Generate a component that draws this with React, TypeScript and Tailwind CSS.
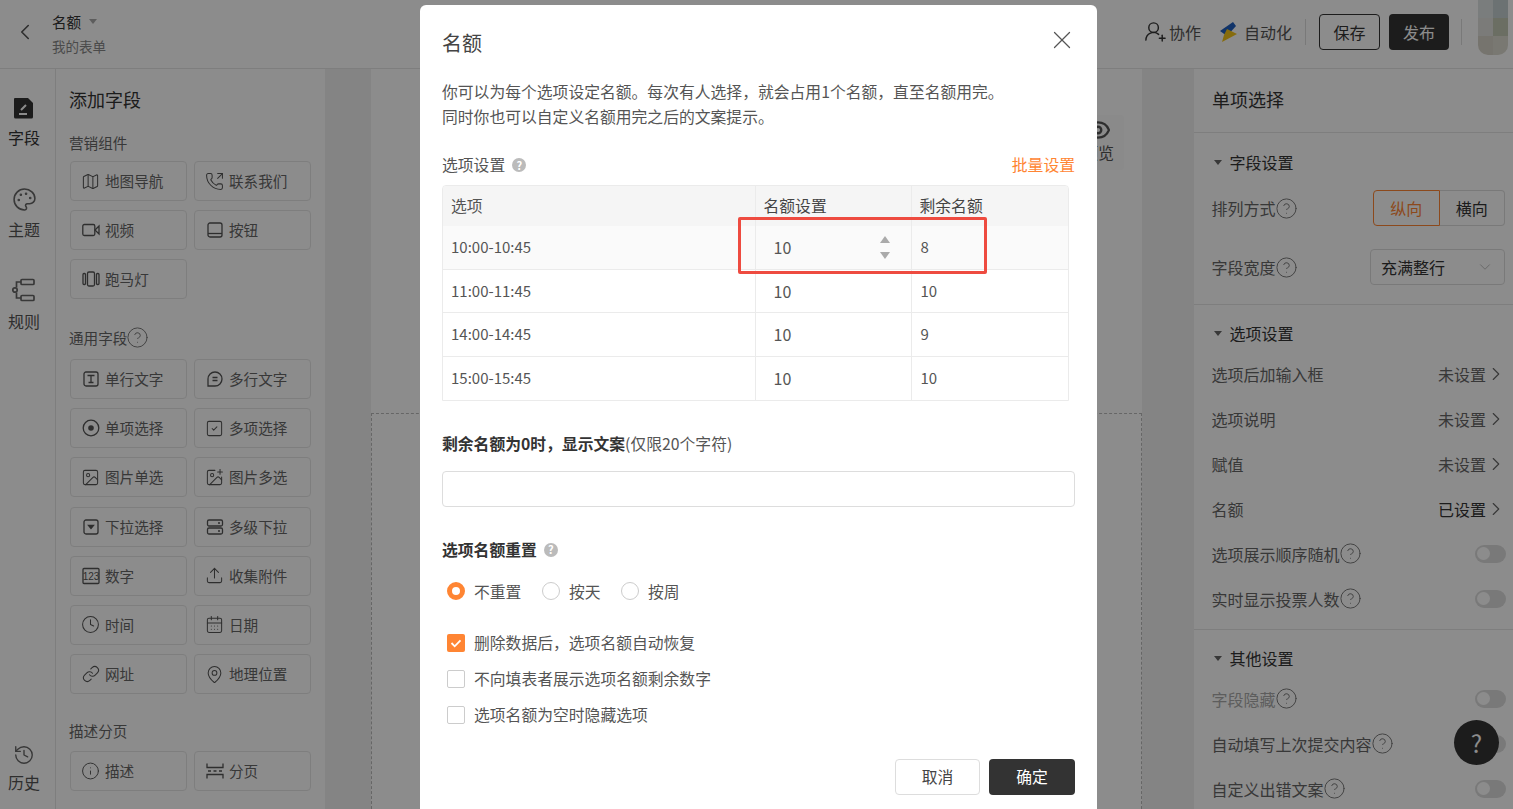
import { ReactNode } from "react";
import {
  CalendarDays,
  ChevronDown,
  ChevronLeft,
  ChevronRight,
  CircleHelp,
  Clock,
  Eye,
  History,
  Image,
  ImagePlus,
  Info,
  Link,
  Map,
  MapPin,
  Palette,
  PhoneOutgoing,
  SquareCheck,
  Upload,
  UserRoundPlus,
  X,
} from "lucide-react";

const font = "font-['Noto_Sans_CJK_SC','Noto_Sans',sans-serif]";

function Svg({ children }: { children: ReactNode }) {
  return (
    <svg width="18" height="18" viewBox="0 0 18 18" fill="none" stroke="currentColor" strokeWidth="1.3" className="shrink-0">
      {children}
    </svg>
  );
}

const VideoIcon = () => (
  <Svg>
    <rect x="0.800" y="3.500" width="12" height="11" rx="1.500" />
    <path d="M17 5l-4 4 4 4z" />
  </Svg>
);
const RadioIcon = () => (
  <Svg>
    <circle cx="9" cy="9" r="7.800" />
    <circle cx="9" cy="9" r="2.800" fill="currentColor" stroke="none" />
  </Svg>
);
const ButtonIcon = () => (
  <Svg>
    <rect x="2" y="2" width="14" height="14" rx="2" />
    <path d="M2 12.500h14" />
  </Svg>
);
const MarqueeIcon = () => (
  <Svg>
    <rect x="5.500" y="2" width="7" height="14" rx="1.500" />
    <rect x="1" y="3.500" width="2.500" height="11" rx="1" />
    <rect x="14.500" y="3.500" width="2.500" height="11" rx="1" />
  </Svg>
);
const TextIcon = () => (
  <Svg>
    <rect x="2" y="2" width="14" height="14" rx="2" />
    <path d="M5.500 5.500h7M9 5.500v7M6.500 12.500h5" />
  </Svg>
);
const ParagraphIcon = () => (
  <Svg>
    <path d="M9 2a7 7 0 1 1 0 14H2V9a7 7 0 0 1 7-7z" />
    <path d="M6.500 7.500h5M6.500 10.500h5" />
  </Svg>
);
const DropdownIcon = () => (
  <Svg>
    <rect x="2" y="2" width="14" height="14" rx="2" />
    <path d="M6.500 7.500h5L9 10.500z" fill="currentColor" />
  </Svg>
);
const CascadeIcon = () => (
  <Svg>
    <rect x="1.500" y="2" width="15" height="6" rx="1.500" />
    <rect x="1.500" y="10" width="15" height="6" rx="1.500" />
    <path d="M12 5h2M12 13h2" />
  </Svg>
);
const NumberIcon = () => (
  <Svg>
    <rect x="1" y="1.500" width="16" height="15" rx="1" />
    <text x="9" y="12.800" textAnchor="middle" fontSize="10" fill="currentColor" stroke="none" fontFamily="Liberation Sans">
      123
    </text>
  </Svg>
);
const PageIcon = () => (
  <Svg>
    <path d="M1 1.500v4h16v-4M1 16.500v-4h16v4" />
    <path d="M2 9h3M7.500 9h3M13 9h3" />
  </Svg>
);

const groups: { title: string; help?: boolean; gap: string; after: string; items: [string, ReactNode][] }[] = [
  {
    title: "营销组件",
    gap: "mb-[8px]",
    after: "mb-[28.600px]",
    items: [
      ["地图导航", <Map size={19} strokeWidth={1.3} />],
      ["联系我们", <PhoneOutgoing size={19} strokeWidth={1.3} />],
      ["视频", <VideoIcon />],
      ["按钮", <ButtonIcon />],
      ["跑马灯", <MarqueeIcon />],
    ],
  },
  {
    title: "通用字段",
    help: true,
    gap: "mb-[11px]",
    after: "mb-[27px]",
    items: [
      ["单行文字", <TextIcon />],
      ["多行文字", <ParagraphIcon />],
      ["单项选择", <RadioIcon />],
      ["多项选择", <SquareCheck size={19} strokeWidth={1.3} />],
      ["图片单选", <Image size={19} strokeWidth={1.3} />],
      ["图片多选", <ImagePlus size={19} strokeWidth={1.3} />],
      ["下拉选择", <DropdownIcon />],
      ["多级下拉", <CascadeIcon />],
      ["数字", <NumberIcon />],
      ["收集附件", <Upload size={19} strokeWidth={1.3} />],
      ["时间", <Clock size={19} strokeWidth={1.3} />],
      ["日期", <CalendarDays size={19} strokeWidth={1.3} />],
      ["网址", <Link size={18} strokeWidth={1.4} />],
      ["地理位置", <MapPin size={19} strokeWidth={1.3} />],
    ],
  },
  {
    title: "描述分页",
    gap: "mb-[10px]",
    after: "mb-[28px]",
    items: [
      ["描述", <Info size={20} strokeWidth={1.2} />],
      ["分页", <PageIcon />],
    ],
  },
];

const quotas = [
  { name: "10:00-10:45", left: 8 },
  { name: "11:00-11:45", left: 10 },
  { name: "14:00-14:45", left: 9 },
  { name: "15:00-15:45", left: 10 },
];

const avatarColors = ["#dfe3e3", "#c5d0d2", "#e0e0dc", "#c4c8b4", "#d8d3c8", "#dcdad0"];

function Help() {
  return <CircleHelp size={23} strokeWidth={1} className="-mx-[1px] shrink-0 text-[#777]" />;
}

function SolidHelp() {
  return (
    <span className="flex size-[14px] items-center justify-center rounded-full bg-[#bbb] text-[11px] font-bold leading-none text-white">
      ?
    </span>
  );
}

function Toggle() {
  return (
    <span className="flex h-[18px] w-[31px] items-center rounded-full bg-[#ddd] pl-[2px]">
      <span className="size-[13px] rounded-full bg-white" />
    </span>
  );
}

function Arrow({ label, strong }: { label: string; strong?: boolean }) {
  return (
    <span className={`flex items-center text-[16px] ${strong ? "text-[#333]" : "text-[#666]"}`}>
      {label}
      <ChevronRight size={22} strokeWidth={1.2} className="-ml-[1px] text-[#666]" />
    </span>
  );
}

function SideRow({ children, right, className = "h-[45px]" }: { children: ReactNode; right: ReactNode; className?: string }) {
  return (
    <div className={`flex items-center justify-between text-[16px] text-[#666] ${className}`}>
      <span className="flex items-center whitespace-nowrap">{children}</span>
      {right}
    </div>
  );
}

function SectionTitle({ children }: { children: ReactNode }) {
  return (
    <div className="flex h-[22px] items-center gap-[8px] text-[16px] leading-none text-[#333]">
      <span className="ml-[2px] size-0 border-x-[4px] border-t-[5px] border-x-transparent border-t-[#666]" />
      {children}
    </div>
  );
}

function Rail() {
  return (
    <aside className="flex w-[56px] shrink-0 flex-col items-center border-r border-[#e6e6e6] pt-[27px] pr-[7px] text-[16px] leading-none text-[#555]">
      <svg width="24" height="24" viewBox="0 0 24 24">
        <path d="M3 2h13l5 5v14a1.500 1.500 0 0 1-1.500 1.500h-16A1.500 1.500 0 0 1 2 21V3a1 1 0 0 1 1-1z" fill="#333" />
        <path d="M9 14l5-5M7 18h8" stroke="#fff" strokeWidth="2" />
      </svg>
      <span className="mt-[9px] text-[#333]">字段</span>
      <Palette size={25} strokeWidth={1.5} className="mt-[42px] text-[#666]" />
      <span className="mt-[9px]">主题</span>
      <svg width="26" height="26" viewBox="0 0 26 26" fill="none" stroke="#666" strokeWidth="1.700" className="mt-[40px]">
        <rect x="10" y="2.500" width="13" height="5" rx="1" />
        <rect x="10" y="18.500" width="13" height="5" rx="1" />
        <circle cx="4" cy="13" r="2.200" />
        <path d="M10 5H5.500v5.500M5.500 15.500V21H10" />
      </svg>
      <span className="mt-[10px]">规则</span>
      <div className="mt-auto mb-[19px] flex flex-col items-center">
        <History size={22} strokeWidth={1.5} className="text-[#666]" />
        <span className="mt-[8px]">历史</span>
      </div>
    </aside>
  );
}

function FieldPanel() {
  return (
    <aside className="w-[269px] shrink-0 pl-[14px] text-[#666]">
      <h2 className="mt-[18px] -ml-[1px] text-[18px] leading-[24px] text-[#333]">添加字段</h2>
      {groups.map(group => (
        <section key={group.title} className={group.after}>
          <div className={`mt-[22px] -ml-[1px] flex h-[20px] items-center text-[14.600px] ${group.gap}`}>
            {group.title}
            {group.help && <Help />}
          </div>
          <div className="grid grid-cols-[117px_117px] gap-x-[7px] gap-y-[9.200px]">
            {group.items.map(([label, icon]) => (
              <div key={label} className="flex h-[40px] items-center gap-[5px] rounded-[4px] border border-[#e6e6e6] pl-[10px] text-[14.600px]">
                <span className="flex w-[19px] shrink-0 justify-center text-[#555]">{icon}</span>
                {label}
              </div>
            ))}
          </div>
        </section>
      ))}
    </aside>
  );
}

function Canvas() {
  return (
    <main className="flex flex-1 bg-[#f0f0f0] pr-[52px] pl-[46px]">
      <div className="flex flex-1 flex-col bg-white">
        <div className="flex h-[344px] shrink-0 justify-end pt-[46px] pr-[18px]">
          <div className="flex h-[55px] w-[52px] flex-col items-center rounded-[4px] bg-[#fbfbfb] pt-[2px] text-[16px] leading-none text-[#555]">
            <Eye size={26} strokeWidth={2.200} />
            <span className="mt-[1px]">预览</span>
          </div>
        </div>
        <div className="flex-1 border-x border-t border-dashed border-[#bbb]" />
      </div>
    </main>
  );
}

function SettingsPanel() {
  return (
    <aside className="w-[319px] shrink-0 bg-white text-[#666]">
      <div className="flex h-[64px] items-center border-b border-[#e6e6e6] pb-[2px] pl-[18px] text-[18px] text-[#333]">单项选择</div>
      <div className="h-[172px] border-b border-[#e6e6e6] pt-[18px] pr-[8px] pl-[17.500px]">
        <SectionTitle>字段设置</SectionTitle>
        <SideRow className="mt-[17px] h-[36px]" right={
          <div className="flex h-[36px] w-[132px] text-[16px]">
            <span className="flex flex-1 items-center justify-center rounded-l-[4px] border border-[#ff8533] text-[#ff8533]">纵向</span>
            <span className="flex flex-1 items-center justify-center rounded-r-[4px] border border-l-0 border-[#ddd] text-[#333]">横向</span>
          </div>
        }>
          排列方式<Help />
        </SideRow>
        <SideRow className="mt-[23px] h-[36px]" right={
          <div className="flex h-[36px] w-[135px] items-center justify-between rounded-[4px] border border-[#ddd] pr-[10px] pl-[10px] text-[#333]">
            充满整行
            <ChevronDown size={18} strokeWidth={1} className="text-[#aaa]" />
          </div>
        }>
          字段宽度<Help />
        </SideRow>
      </div>
      <div className="h-[325px] border-b border-[#e6e6e6] pt-[17px] pr-[6px] pl-[17.500px]">
        <SectionTitle>选项设置</SectionTitle>
        <div className="mt-[7px]">
          <SideRow right={<Arrow label="未设置" />}>选项后加输入框</SideRow>
          <SideRow right={<Arrow label="未设置" />}>选项说明</SideRow>
          <SideRow right={<Arrow label="未设置" />}>赋值</SideRow>
          <SideRow right={<Arrow label="已设置" strong />}>名额</SideRow>
          <SideRow className="mr-[1px] h-[45px]" right={<Toggle />}>选项展示顺序随机<Help /></SideRow>
          <SideRow className="mr-[1px] h-[45px]" right={<Toggle />}>实时显示投票人数<Help /></SideRow>
        </div>
      </div>
      <div className="pt-[17px] pr-[7px] pl-[17.500px]">
        <SectionTitle>其他设置</SectionTitle>
        <div className="mt-[7px]">
          <SideRow right={<Toggle />}><span className="text-[#aaa]">字段隐藏</span><Help /></SideRow>
          <SideRow right={<Toggle />}>自动填写上次提交内容<Help /></SideRow>
          <SideRow right={<Toggle />}>自定义出错文案<Help /></SideRow>
        </div>
      </div>
    </aside>
  );
}

function Header() {
  return (
    <header className="flex h-[69px] shrink-0 items-center border-b border-[#e6e6e6] pb-[5px] text-[16px] text-[#555]">
      <ChevronLeft size={26} strokeWidth={1.500} className="ml-[12px] text-[#555]" />
      <div className="mt-[2px] ml-[14px]">
        <div className="flex h-[24px] items-center gap-[8px] text-[14.600px] text-[#333]">
          名额
          <span className="size-0 border-x-[4px] border-t-[5px] border-x-transparent border-t-[#aaa]" />
        </div>
        <div className="mt-[2px] text-[13.500px] leading-[20px] text-[#888]">我的表单</div>
      </div>
      <div className="ml-auto flex items-center">
        <UserRoundPlus size={23} strokeWidth={1.500} className="text-[#333]" />
        <span className="ml-[2px]">协作</span>
        <svg width="18" height="20" viewBox="0 0 18 20" className="ml-[19px]">
          <path d="M0 9L13 0l3 4-9 10z" fill="#1f5fbf" />
          <path d="M7 7l10 5L2 20l2-7z" fill="#f5c518" />
        </svg>
        <span className="ml-[6px]">自动化</span>
        <span className="mx-[13px] h-[26px] w-px bg-[#ddd]" />
        <button className="h-[36px] w-[61px] rounded-[4px] border border-[#333] text-[#333]">保存</button>
        <button className="mt-[1px] ml-[9px] h-[36px] w-[60px] rounded-[4px] bg-[#333] text-white">发布</button>
        <span className="mr-[16px] ml-[12px] h-[26px] w-px bg-[#ddd]" />
        <div className="mr-[5px] mb-[9px] grid h-[55px] w-[30px] grid-cols-2 grid-rows-3 overflow-hidden rounded-b-[10px]">
          {avatarColors.map(color => (
            <span key={color} style={{ backgroundColor: color }} />
          ))}
        </div>
      </div>
    </header>
  );
}

function Radio({ label, on }: { label: string; on?: boolean }) {
  return (
    <span className="flex items-center gap-[9px]">
      {on ? (
        <span className="-mt-[2px] size-[18px] rounded-full border-[5px] border-[#ff8533] bg-white" />
      ) : (
        <span className="-mt-[2px] size-[18px] rounded-full border border-[#ccc]" />
      )}
      {label}
    </span>
  );
}

function Check({ label, on }: { label: string; on?: boolean }) {
  return (
    <div className="flex h-[18px] items-center gap-[9px] text-[15.800px] text-[#555]">
      {on ? (
        <svg width="18" height="18" viewBox="0 0 18 18">
          <rect width="18" height="18" rx="2" fill="#ff8533" />
          <path d="M4.500 9l3.200 3.300 5.800-6" fill="none" stroke="#fff" strokeWidth="1.800" />
        </svg>
      ) : (
        <span className="size-[18px] rounded-[2px] border border-[#ccc]" />
      )}
      {label}
    </div>
  );
}

function QuotaModal() {
  return (
    <div className="absolute top-[5px] left-[420px] h-[830px] w-[677px] rounded-[6px] bg-white px-[22px] text-[15.800px] text-[#555]">
      <div className="flex h-[53px] items-end justify-between">
        <h2 className="text-[20px] leading-[30px] text-[#444]">名额</h2>
        <X size={30} strokeWidth={1} className="-mr-[2px] mb-[3px] text-[#555]" />
      </div>
      <p className="mt-[21px] leading-[25px]">
        你可以为每个选项设定名额。每次有人选择&#xFF0C;就会占用1个名额&#xFF0C;直至名额用完。
        <br />
        同时你也可以自定义名额用完之后的文案提示。
      </p>
      <div className="mt-[25px] flex h-[22px] items-center justify-between">
        <span className="flex items-center gap-[7px]">选项设置 <SolidHelp /></span>
        <span className="text-[#ff8533]">批量设置</span>
      </div>
      <div className="relative mt-[9px] w-[627px]">
        <div className="overflow-hidden rounded-t-[4px] border border-[#ebebeb]">
          <table className="w-full table-fixed text-left">
            <colgroup>
              <col className="w-[312px]" />
              <col className="w-[156px]" />
              <col className="w-[157px]" />
            </colgroup>
            <thead className="bg-[#f5f5f5]">
              <tr className="h-[40px]">
                <th className="pl-[8px] font-normal">选项</th>
                <th className="border-l border-[#ebebeb] pl-[8px] font-normal text-[#444]">名额设置</th>
                <th className="border-l border-[#ebebeb] pl-[8px] font-normal text-[#444]">剩余名额</th>
              </tr>
            </thead>
            <tbody className="text-[15px]">
              {quotas.map((row, i) => (
                <tr key={row.name} className={`h-[43.400px] ${i === 0 ? "bg-[#fafafa]" : "border-t border-[#ebebeb]"}`}>
                  <td className="pl-[8px]">{row.name}</td>
                  <td className="border-l border-[#ebebeb] pl-[18px] text-[16px]">
                    <div className="-my-[1px] flex items-center justify-between pr-[21px] leading-[20px]">
                      10
                      {i === 0 && (
                        <span className="-my-[4px] flex flex-col gap-[9px]">
                          <span className="size-0 border-x-[5px] border-b-[7px] border-x-transparent border-b-[#aaa]" />
                          <span className="size-0 border-x-[5px] border-t-[7px] border-x-transparent border-t-[#aaa]" />
                        </span>
                      )}
                    </div>
                  </td>
                  <td className="border-l border-[#ebebeb] pl-[9px]">{row.left}</td>
                </tr>
              ))}
            </tbody>
          </table>
        </div>
        <div className="absolute top-[32px] left-[296px] h-[57px] w-[249px] rounded-[2px] border-[3px] border-[#ee4b40]" />
      </div>
      <div className="mt-[31px] leading-[24px]">
        <span className="font-bold text-[#333]">剩余名额为0时&#xFF0C;显示文案</span>(仅限20个字符)
      </div>
      <div className="mt-[15px] h-[36px] rounded-[4px] border border-[#ddd]" />
      <div className="mt-[31px] flex h-[24px] items-center gap-[7px] font-bold text-[#333]">选项名额重置 <SolidHelp /></div>
      <div className="mt-[18px] ml-[5px] flex h-[24px] items-center gap-[20.500px]">
        <Radio label="不重置" on />
        <Radio label="按天" />
        <Radio label="按周" />
      </div>
      <div className="mt-[30px] ml-[5px] flex flex-col gap-[18px]">
        <Check label={"删除数据后\uFF0C选项名额自动恢复"} on />
        <Check label="不向填表者展示选项名额剩余数字" />
        <Check label="选项名额为空时隐藏选项" />
      </div>
      <div className="mt-[35px] flex justify-end gap-[9px]">
        <button className="h-[36px] w-[85px] rounded-[4px] border border-[#ddd] text-[#444]">取消</button>
        <button className="h-[36px] w-[86px] rounded-[4px] bg-[#333] text-white">确定</button>
      </div>
    </div>
  );
}

export default function App() {
  return (
    <div className={`relative flex h-screen flex-col overflow-hidden bg-white ${font}`}>
      <Header />
      <div className="flex min-h-0 flex-1">
        <Rail />
        <FieldPanel />
        <Canvas />
        <SettingsPanel />
      </div>
      <div className="absolute top-[720px] left-[1454px] flex size-[45px] items-center justify-center rounded-full bg-[#333] text-[24px] text-white">?</div>
      <div className="absolute inset-0 bg-black/45" />
      <QuotaModal />
    </div>
  );
}
